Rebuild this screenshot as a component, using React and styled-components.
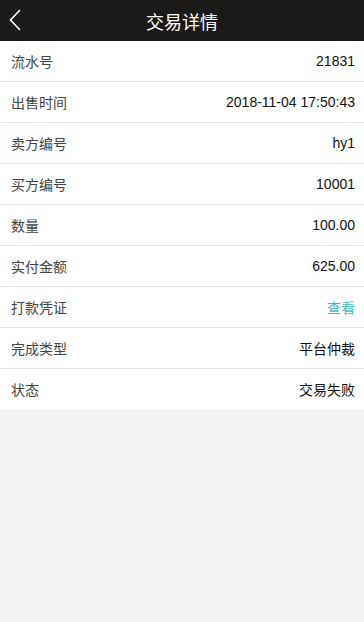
import styled, { createGlobalStyle } from 'styled-components';

const GlobalStyle = createGlobalStyle`
  html, body {
    margin: 0;
    padding: 0;
    background: #f4f4f4;
    font-family: "Liberation Sans", Arial, "Noto Sans CJK SC", sans-serif;
  }
`;

const rows = [
  { label: '流水号', value: '21831' },
  { label: '出售时间', value: '2018-11-04 17:50:43' },
  { label: '卖方编号', value: 'hy1' },
  { label: '买方编号', value: '10001' },
  { label: '数量', value: '100.00' },
  { label: '实付金额', value: '625.00' },
  { label: '打款凭证', value: '查看', link: true },
  { label: '完成类型', value: '平台仲裁' },
  { label: '状态', value: '交易失败' },
];

function App() {
  return (
    <Page>
      <GlobalStyle />
      <Header>
        <BackButton>
          <svg width="12" height="22" viewBox="0 0 12 22">
            <path d="M11 1 L1.5 11 L11 21" fill="none" stroke="#fff" strokeWidth="1.6" />
          </svg>
        </BackButton>
        <Title>交易详情</Title>
      </Header>
      <List>
        {rows.map((r) => (
          <Row key={r.label}>
            <Label>{r.label}</Label>
            <Value $link={r.link}>{r.value}</Value>
          </Row>
        ))}
      </List>
    </Page>
  );
}

const Page = styled.div`
  min-height: 622px;
  background: #f4f4f4;
`;

const Header = styled.div`
  position: relative;
  height: 41px;
  background: #1b1a19;
  display: flex;
  align-items: center;
  justify-content: center;
`;

const BackButton = styled.div`
  position: absolute;
  left: 9px;
  top: 9px;
  height: 22px;
  display: flex;
`;

const Title = styled.div`
  color: #fff;
  font-size: 18px;
  font-family: "Noto Sans CJK SC", sans-serif;
`;

const List = styled.div`
  background: #fff;
`;

const Row = styled.div`
  height: 40px;
  display: flex;
  align-items: center;
  justify-content: space-between;
  padding: 0 9px 0 11px;
  border-bottom: 1px solid #e1e1e1;
  font-size: 14px;
  &:last-child {
    border-bottom: none;
  }
`;

const Label = styled.span`
  color: #444;
`;

const Value = styled.span`
  color: ${(p) => (p.$link ? '#45b8c4' : '#111')};
`;

export default App;
